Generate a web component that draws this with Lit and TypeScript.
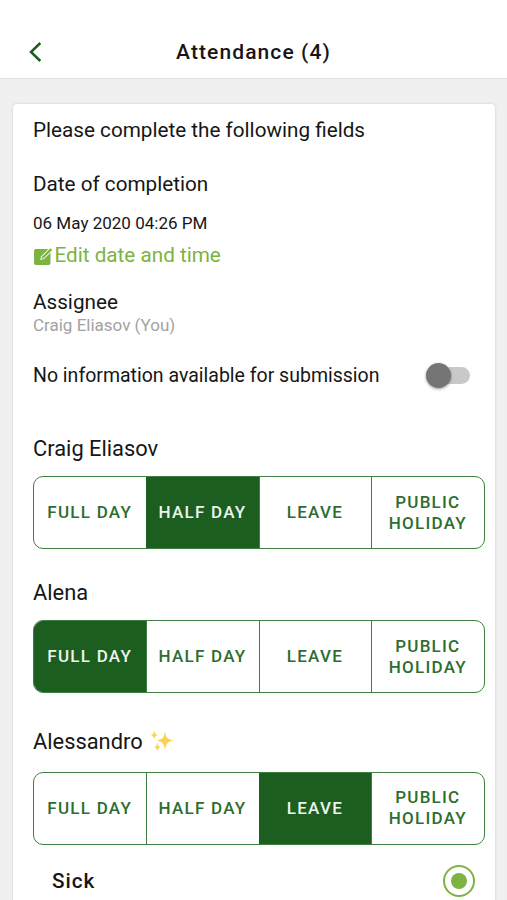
import { LitElement, html, css, svg } from "lit";
import { customElement, property } from "lit/decorators.js";
import { classMap } from "lit/directives/class-map.js";

const OPTIONS = ["FULL DAY", "HALF DAY", "LEAVE", "PUBLIC HOLIDAY"];

@customElement("segmented-choice")
class SegmentedChoice extends LitElement {
  @property({ type: Number }) selected = -1;

  static styles = css`
    :host { display: block; }
    .group {
      display: grid;
      grid-template-columns: repeat(4, 1fr);
      height: 73px;
      box-sizing: border-box;
      border: 1.5px solid #3f7f43;
      border-radius: 10px;
      overflow: hidden;
      background: #fff;
    }
    .option {
      display: flex;
      align-items: center;
      justify-content: center;
      text-align: center;
      padding: 0 11px 0 10px;
      font-size: 17px;
      font-weight: 500;
      line-height: 21px;
      letter-spacing: 1.25px;
      color: #2b6e30;
      border-left: 1px solid #3f7f43;
    }
    .option:first-child { border-left: 0; }
    .option:last-child { padding: 0 10px; }
    .on { background: #1b5e1f; color: #eef5ee; border-left-color: #1b5e1f; box-shadow: 0.5px 0 0 0.5px #1b5e1f; }
  `;

  render() {
    return html`<div class="group">
      ${OPTIONS.map((label, i) => html`<div class=${classMap({ option: true, on: i === this.selected })}>${label}</div>`)}
    </div>`;
  }
}

const sparkles = svg`
  <path fill="#fcd254" d="M15 1C15.9 7.8 17.3 9.4 24 10.6C17.3 11.8 15.9 13.5 15 20.8C14.1 13.5 12.7 11.8 6 10.6C12.7 9.4 14.1 7.8 15 1Z"/>
  <path fill="#fcd254" d="M4.2 .4C4.8 3.4 5.4 4.4 8.2 5C5.4 5.6 4.8 6.6 4.2 9.6C3.6 6.6 3 5.6 .4 5C3 4.4 3.6 3.4 4.2 .4Z"/>
  <path fill="#fcd254" d="M7.4 12.4C8 15.6 8.6 16.5 11.4 17.1C8.6 17.7 8 18.6 7.4 21.8C6.8 18.6 6.2 17.7 3.6 17.1C6.2 16.5 6.8 15.6 7.4 12.4Z"/>`;

@customElement("app-root")
class AppRoot extends LitElement {
  static styles = css`
    :host {
      display: flex;
      flex-direction: column;
      height: 900px;
      overflow: hidden;
      background: #f0f0f0;
      font-family: Roboto, "Liberation Sans", sans-serif;
      color: #161616;
    }
    .bar {
      display: grid;
      grid-template-columns: 70px 1fr 70px;
      align-items: center;
      flex: none;
      height: 78px;
      padding-top: 26px;
      box-sizing: border-box;
      background: #fff;
      box-shadow: 0 1px 1px #e4e4e4;
    }
    .back { display: block; margin-left: 28px; }
    .title {
      text-align: center;
      font-size: 21px;
      font-weight: 500;
      line-height: 26px;
      letter-spacing: 1.1px;
      white-space: nowrap;
    }
    .card {
      flex: none;
      height: 820px;
      box-sizing: border-box;
      margin: 26px 12.5px 0 13px;
      padding: 13px 10px 0 20px;
      background: #fff;
      border-radius: 4px;
      box-shadow: 0 0 3px rgba(0, 0, 0, 0.16);
    }
    .line { font-size: 20.7px; line-height: 26px; white-space: nowrap; }
    .date-label { margin-top: 28px; }
    .date { margin-top: 14px; font-size: 17.05px; line-height: 24px; }
    .edit { display: flex; align-items: center; margin-top: 7px; color: #7cb342; }
    .edit svg { margin: 3px 0.5px 0 0; }
    .assignee { margin-top: 21px; }
    .who { margin-top: -1px; font-size: 17px; line-height: 22px; color: #a2a2a2; }
    .info { display: flex; align-items: center; justify-content: space-between; margin-top: 27px; padding-right: 14.5px; font-size: 19.5px; }
    .toggle { width: 41px; height: 17px; margin-top: -2px; border-radius: 9px; background: #c9c9c9; display: flex; align-items: center; }
    .knob { width: 25px; height: 25px; flex: none; margin-left: -3px; border-radius: 50%; background: #757575; box-shadow: 0 1px 3px rgba(0, 0, 0, 0.4); }
    .name { font-size: 21.85px; }
    .craig { margin-top: 47px; }
    .alena { margin-top: 31px; }
    .alessandro { display: flex; align-items: center; gap: 7px; margin-top: 36px; }
    .choice { margin-top: 14px; }
    .choice-low { margin-top: 16.5px; }
    .reason { display: flex; align-items: center; justify-content: space-between; margin-top: 20.5px; padding: 0 9.5px 0 19px; font-weight: 500; letter-spacing: 1px; }
    .radio { width: 32px; height: 32px; box-sizing: border-box; border: 2.5px solid #7cb342; border-radius: 50%; display: grid; place-items: center; }
    .dot { width: 16px; height: 16px; border-radius: 50%; background: #7cb342; }
  `;

  render() {
    return html`
      <div class="bar">
        <svg class="back" width="16" height="22" viewBox="0 0 16 22" fill="none" stroke="#1b5e20" stroke-width="2.5">
          <path d="M12.3 2L3 11L12.3 20" />
        </svg>
        <div class="title">Attendance (4)</div>
      </div>
      <div class="card">
        <div class="line">Please complete the following fields</div>
        <div class="line date-label">Date of completion</div>
        <div class="line date">06 May 2020 04:26 PM</div>
        <div class="line edit">
          <svg width="21" height="19" viewBox="0 0 21 19">
            <rect x="1" y="2" width="16.5" height="16" rx="2" fill="#7cb342" />
            <path d="M7.2 13L8.2 9.2L17 0.6L19.8 3.4L11 12Z" fill="#fff" />
            <path d="M8.3 11.9L9 9.8L17.4 1.2L19.2 3L10.5 11.2Z" fill="#7cb342" />
          </svg>
          <span>Edit date and time</span>
        </div>
        <div class="line assignee">Assignee</div>
        <div class="line who">Craig Eliasov (You)</div>
        <div class="line info">
          <span>No information available for submission</span>
          <div class="toggle"><div class="knob"></div></div>
        </div>
        <div class="line name craig">Craig Eliasov</div>
        <segmented-choice class="choice" .selected=${1}></segmented-choice>
        <div class="line name alena">Alena</div>
        <segmented-choice class="choice" .selected=${0}></segmented-choice>
        <div class="line name alessandro">
          <span>Alessandro</span>
          <svg width="24" height="24" viewBox="0 0 24 24">${sparkles}</svg>
        </div>
        <segmented-choice class="choice-low" .selected=${2}></segmented-choice>
        <div class="line reason">
          <span>Sick</span>
          <div class="radio"><div class="dot"></div></div>
        </div>
      </div>
    `;
  }
}
